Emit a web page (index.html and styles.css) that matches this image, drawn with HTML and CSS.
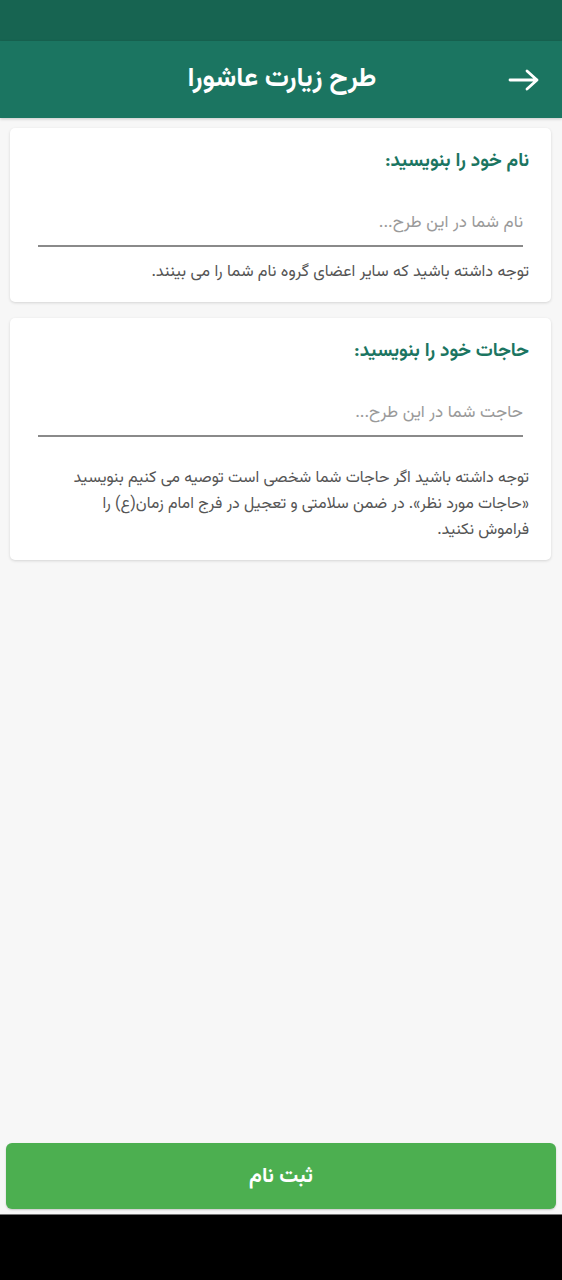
FILE: index.html
```html
<!DOCTYPE html>
<html lang="fa" dir="rtl">
<head>
<meta charset="utf-8">
<title>طرح زیارت عاشورا</title>
<link rel="stylesheet" href="styles.css">
</head>
<body>
<div class="screen">
  <div class="statusbar"></div>
  <header class="appbar">
    <span class="back" aria-label="بازگشت">
      <svg width="32" height="24" viewBox="0 0 32 24"><path d="M2 12H29M19 3l10 9-10 9" fill="none" stroke="#fff" stroke-width="2.8" stroke-linecap="round" stroke-linejoin="round"/></svg>
    </span>
    <h1 class="title">طرح زیارت عاشورا</h1>
  </header>
  <main class="content">
    <section class="card">
      <h2 class="label">نام خود را بنویسید:</h2>
      <input class="field" type="text" placeholder="نام شما در این طرح...">
      <p class="note">توجه داشته باشید که سایر اعضای گروه نام شما را می بینند.</p>
    </section>
    <section class="card">
      <h2 class="label">حاجات خود را بنویسید:</h2>
      <input class="field" type="text" placeholder="حاجت شما در این طرح...">
      <p class="note note-wide">توجه داشته باشید اگر حاجات شما شخصی است توصیه می کنیم بنویسید «حاجات مورد نظر». در ضمن سلامتی و تعجیل در فرج امام زمان(ع) را فراموش نکنید.</p>
    </section>
  </main>
  <div class="actions">
    <button class="submit" type="button">ثبت نام</button>
  </div>
  <div class="navbar"></div>
</div>
</body>
</html>
```

FILE: styles.css
```css
* { box-sizing: border-box; }
html, body { margin: 0; padding: 0; }
body {
  font-family: "Vazirmatn", "Noto Sans Arabic", "DejaVu Sans", sans-serif;
  background: #f7f7f7;
}
.screen {
  width: 562px;
  height: 1280px;
  display: flex;
  flex-direction: column;
}
.statusbar {
  height: 41px;
  background: #176451;
  flex: none;
}
.appbar {
  height: 77px;
  flex: none;
  background: #1b7561;
  display: flex;
  align-items: center;
  position: relative;
  box-shadow: 0 1px 3px rgba(0,0,0,0.2);
}
.back {
  position: absolute;
  right: 22px;
  top: 27px;
  display: flex;
}
.title {
  margin: 0 auto;
  padding-left: 2px;
  color: #fff;
  font-size: 27px;
  font-weight: bold;
  line-height: 36px;
}
.content {
  flex: 1;
  padding: 10px 11px 0 10px;
  display: flex;
  flex-direction: column;
  gap: 16px;
}
.card {
  background: #fff;
  border-radius: 5px;
  box-shadow: 0 1px 3px rgba(0,0,0,0.14);
  padding: 20px 22px 0 22px;
}
.label {
  margin: 0;
  color: #1b7561;
  font-size: 19px;
  font-weight: bold;
  line-height: 28px;
}
.field {
  display: block;
  width: calc(100% - 12px);
  margin: 30px 6px 0 6px;
  border: none;
  border-bottom: 2px solid #8a8a8a;
  background: transparent;
  font-family: inherit;
  font-size: 17px;
  height: 41px;
  padding: 0 0 6px 0;
  outline: none;
  direction: rtl;
}
.field::placeholder { color: #9a9a9a; }
.note {
  margin: 12px 0 0 0;
  color: #555;
  font-size: 16.3px;
  line-height: 26px;
  padding: 0 0 17px 22px;
}
.note-wide {
  margin-top: 29px;
  padding-bottom: 16px;
  font-size: 16px;
}
.actions {
  flex: none;
  padding: 0 6px 5px 6px;
}
.submit {
  display: block;
  width: 100%;
  height: 66px;
  border: none;
  border-radius: 6px;
  background: #4caf50;
  color: #fff;
  font-family: inherit;
  font-size: 21px;
  font-weight: bold;
  box-shadow: 0 1px 2px rgba(0,0,0,0.2);
}
.navbar {
  height: 66px;
  flex: none;
  background: #000;
  border-top: 1px solid #777;
}
```
